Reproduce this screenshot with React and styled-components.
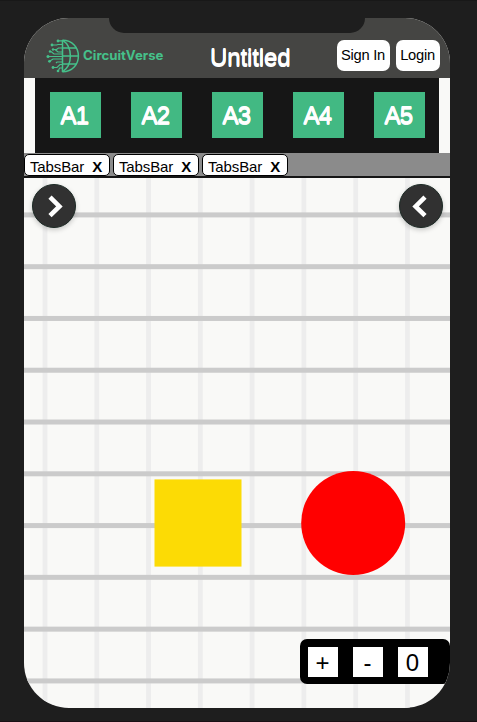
import React from "react";
import styled, { createGlobalStyle } from "styled-components";

const GlobalStyle = createGlobalStyle`
  * { box-sizing: border-box; }
  body { margin: 0; background: #1e1e1e; font-family: "Liberation Sans", Arial, sans-serif; }
`;

const Stage = styled.main`
  width: 477px;
  height: 722px;
  padding: 17px 24px 0;
  background: #1e1e1e;
  border-top: 1px solid #181818;
  border-bottom: 1px solid #190f14;
  overflow: hidden;
`;

const Phone = styled.div`
  position: relative;
  display: flex;
  flex-direction: column;
  width: 426px;
  height: 690px;
  border-radius: 45px;
  background: #f9f9f7;
  overflow: hidden;
`;

const Notch = styled.div`
  position: absolute;
  top: 0;
  left: 85px;
  width: 256px;
  height: 15px;
  border-radius: 0 0 15px 15px;
  background: #1e1e1e;
`;

const Header = styled.header`
  display: flex;
  align-items: flex-start;
  height: 60px;
  flex: none;
  padding: 21px 10px 0 22px;
  background: #454543;
`;

const LogoArt = styled.svg`
  display: block;
  width: 122px;
  height: 34px;
  flex: none;
`;

const LogoName = styled.text`
  font: 700 12.6px Inter, sans-serif;
  fill: #45c08a;
`;

const Title = styled.h1`
  margin: 5px 0 0 42px;
  width: 127px;
  font-size: 24px;
  line-height: 27px;
  letter-spacing: -0.12px;
  font-weight: 400;
  color: #fff;
  -webkit-text-stroke: 0.2px #fff;
  text-shadow: 0 -1px 0 #fff, 0 1px 0 #fff;
`;

const AccountButton = styled.button`
  width: ${(p) => p.$width}px;
  height: 31px;
  margin: 1px ${(p) => p.$gap || 0}px 0 0;
  padding: 0 1px 0 0;
  flex: none;
  border: 0;
  border-radius: 7px;
  background: #fff;
  color: #000;
  font: 14.7px/31px "Liberation Sans", Arial, sans-serif;
  letter-spacing: -0.25px;
`;

const Toolbar = styled.nav`
  display: flex;
  align-items: center;
  gap: 30px;
  width: 404px;
  height: 75px;
  flex: none;
  margin-left: 11px;
  padding: 0 0 1px 15px;
  background: #161616;
`;

const ToolButton = styled.button`
  width: 51px;
  height: 46px;
  padding: 2px 2px 0 0;
  border: 0;
  background: #42b983;
  color: #fff;
  font: 24px/44px "Liberation Sans", Arial, sans-serif;
  letter-spacing: -0.8px;
  -webkit-text-stroke: 0.6px #fff;
  text-shadow: 0 1px 0 #f4f4f4, 0 -1px 0 #fff;
`;

const TabBar = styled.div`
  display: flex;
  align-items: flex-end;
  gap: 3px;
  height: 25px;
  flex: none;
  background: #8b8b8b;
  border-bottom: 2px solid #161616;
`;

const Tab = styled.div`
  display: flex;
  align-items: center;
  justify-content: space-between;
  width: 86px;
  height: 22px;
  padding: 3px 7px 0 5px;
  border: 1px solid #000;
  border-radius: 5px;
  background: #fff;
  font-size: 15px;
  line-height: 17px;
  letter-spacing: -0.13px;
`;

const CloseMark = styled.b`
  font-size: 15px;
`;

const Workspace = styled.section`
  position: relative;
  flex: 1;
  min-height: 0;
`;

const Canvas = styled.svg`
  display: block;
  width: 426px;
  height: 530px;
`;

const DrawerButton = styled.button`
  position: absolute;
  top: 6px;
  ${(p) => p.$side}: ${(p) => (p.$side === "left" ? 8 : 7)}px;
  width: 44px;
  height: 44px;
  padding: 0;
  border: 1px solid #1c2a25;
  border-radius: 50%;
  background: #313131;
  box-shadow: 0 2px 5px rgba(0, 0, 0, 0.2);
`;

const Chevron = styled.svg`
  display: block;
  width: 42px;
  height: 42px;
`;

const ZoomPanel = styled.div`
  position: absolute;
  right: 0;
  bottom: 24px;
  display: flex;
  gap: 15px;
  width: 150px;
  height: 45px;
  padding: 8px;
  border-radius: 7px;
  background: #000;
`;

const ZoomButton = styled.button`
  width: 30px;
  height: 30px;
  padding: 1px 1px 0 0;
  border: 0;
  background: #fff;
  color: #000;
  font: 24px/30px "Liberation Sans", Arial, sans-serif;
`;

const TOOLS = ["A1", "A2", "A3", "A4", "A5"];
const TABS = [1, 2, 3];
const STEP = 51.78;

function Logo() {
  return (
    <LogoArt viewBox="0 0 122 34" role="img" aria-label="CircuitVerse">
      <g fill="none" stroke="#45c08a" strokeWidth="1.5">
        <path d="M16.5 1.2C26.5 1.2 32.4 8.5 32.4 17S26.5 32.8 16.5 32.8" />
        <path d="M16.5 1v32M16.5 17h16M16.5 9h13.5M16.5 25h13.5" />
        <path d="M16.5 1.2C27 8 27 26 16.5 32.8" />
        <path d="M16.5 1.8h-4M16.5 5.5H12L10.5 6H6M16.5 9h-4l-2 1.5H7M16.5 13H12l-3-2.5M16.5 15H8l-3-2.5M16.5 17.5H2M16.5 20H7l-3 2M16.5 23H11l-1 1M16.5 25.5H14l-3 3H7M16.5 29h-3l-1 2.5" strokeWidth="1.15" />
      </g>
      <g fill="#45c08a">
        <circle cx="12" cy="2" r="1.4" /><circle cx="6" cy="6" r="1.4" />
        <circle cx="7" cy="10.5" r="1.2" /><circle cx="4" cy="12.5" r="1.2" />
        <circle cx="2" cy="17.5" r="1.5" /><circle cx="3.5" cy="22.3" r="1.4" />
        <circle cx="7" cy="28.5" r="1.4" /><circle cx="12" cy="32" r="1.3" />
      </g>
      <LogoName x="37" y="21.2" textLength="80.5" lengthAdjust="spacingAndGlyphs">CircuitVerse</LogoName>
    </LogoArt>
  );
}

function Drawing() {
  return (
    <Canvas viewBox="0 0 426 530">
      {Array.from({ length: 8 }, (_, i) => (
        <rect key={`v${i}`} x={18.6 + i * STEP} y="0" width="4.8" height="530" fill="#ededed" />
      ))}
      {Array.from({ length: 10 }, (_, i) => (
        <rect key={`h${i}`} x="0" y={34.4 + i * STEP} width="426" height="5" fill="#cbcbcb" />
      ))}
      <rect x="130.5" y="301.4" width="87" height="87.2" fill="#fcdb05" />
      <circle cx="329.2" cy="345" r="52" fill="#f00" />
    </Canvas>
  );
}

export default function App() {
  return (
    <Stage>
      <GlobalStyle />
      <Phone>
        <Header>
          <Logo />
          <Title>Untitled</Title>
          <AccountButton $width={53} $gap={6}>Sign In</AccountButton>
          <AccountButton $width={44}>Login</AccountButton>
        </Header>
        <Notch />
        <Toolbar>
          {TOOLS.map((name) => <ToolButton key={name}>{name}</ToolButton>)}
        </Toolbar>
        <TabBar>
          {TABS.map((id) => (
            <Tab key={id}>TabsBar<CloseMark>X</CloseMark></Tab>
          ))}
        </TabBar>
        <Workspace>
          <Drawing />
          <DrawerButton $side="left" aria-label="Open left drawer">
            <Chevron viewBox="0 0 42 42"><path d="m17 12.2 9.4 9.2-9.4 9.2" fill="none" stroke="#fff" strokeWidth="4.6" /></Chevron>
          </DrawerButton>
          <DrawerButton $side="right" aria-label="Open right drawer">
            <Chevron viewBox="0 0 42 42"><path d="m25 12.2-9.4 9.2 9.4 9.2" fill="none" stroke="#fff" strokeWidth="4.6" /></Chevron>
          </DrawerButton>
          <ZoomPanel>
            <ZoomButton>+</ZoomButton>
            <ZoomButton>-</ZoomButton>
            <ZoomButton>0</ZoomButton>
          </ZoomPanel>
        </Workspace>
      </Phone>
    </Stage>
  );
}
